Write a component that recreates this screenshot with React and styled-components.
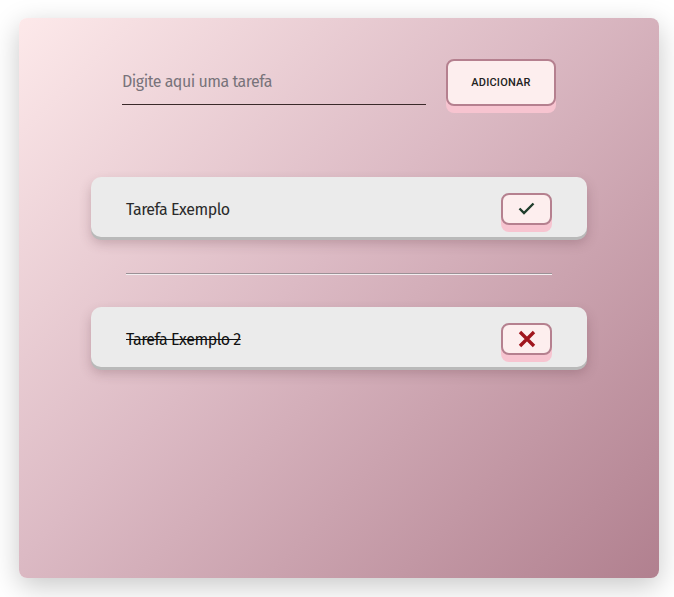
import React from "react";
import styled, { createGlobalStyle } from "styled-components";

const Global = createGlobalStyle`
  html, body { margin: 0; padding: 0; background: #ffffff; }
  body { font-family: "Fira Sans", "Open Sans", "Noto Sans", sans-serif; }
  * { box-sizing: border-box; }
`;

const Page = styled.div`
  padding: 18px 15px 19px 19px;
  width: 674px;
  height: 597px;
`;

const Panel = styled.main`
  width: 640px;
  height: 560px;
  border-radius: 8px;
  background: linear-gradient(135deg, #fde9ea 0%, #dcbac4 45%, #b1808f 100%);
  box-shadow: 0 8px 28px rgba(0, 0, 0, 0.22);
  padding-top: 41px;
  display: flex;
  flex-direction: column;
  align-items: center;
`;

const Form = styled.form`
  display: flex;
  align-items: flex-start;
  gap: 20px;
`;

const Input = styled.input`
  width: 304px;
  height: 45px;
  margin-top: 1px;
  border: none;
  border-bottom: 1px solid #3a2a2a;
  background: transparent;
  font-family: inherit;
  font-size: 16px;
  letter-spacing: -0.5px;
  color: #333;
  padding: 0 0 1px;
  outline: none;
  &::placeholder { color: #78737a; }
`;

const Button = styled.button`
  width: ${(p) => p.$w}px;
  height: ${(p) => p.$h}px;
  margin-top: ${(p) => p.$offset || 0}px;
  border: 2px solid #b5808f;
  border-radius: 8px;
  background: #fdeeee;
  box-shadow: 0 7px 0 #f7c4d0;
  display: flex;
  align-items: center;
  justify-content: center;
  font-family: "Roboto", "Liberation Sans", sans-serif;
  font-size: 11px;
  font-weight: 500;
  color: #222;
  letter-spacing: 0.2px;
  padding: 0;
  cursor: pointer;
`;

const List = styled.ul`
  list-style: none;
  margin: 71px 0 0;
  padding: 0;
  display: flex;
  flex-direction: column;
  align-items: center;
`;

const Card = styled.li`
  width: 496px;
  height: 60px;
  border-radius: 10px;
  background: #ebebeb;
  box-shadow: 0 3px 0 #b9b9b9, 0 6px 12px rgba(80, 40, 50, 0.25);
  display: flex;
  align-items: center;
  justify-content: space-between;
  padding: 0 35px;
`;

const Label = styled.span`
  font-size: 16px;
  letter-spacing: -0.5px;
  text-decoration: ${(p) => (p.$done ? "line-through" : "none")};
  text-decoration-color: #111;
  color: ${(p) => (p.$done ? "#111" : "#2a2a2a")};
  margin-top: 5px;
`;

const Divider = styled.hr`
  width: 426px;
  margin: 36px 0 32px;
  border: none;
  border-top: 1px solid #9b9196;
  border-bottom: 1px solid #f3eef0;
`;

const Check = () => (
  <svg width="17" height="13" viewBox="0 0 17 13">
    <path d="M1.5 6.5 L6 11 L15.5 1.5" fill="none" stroke="#1f3d2c" strokeWidth="2.4" />
  </svg>
);

const Cross = () => (
  <svg width="18" height="18" viewBox="0 0 18 18">
    <path d="M2 2 L16 16 M16 2 L2 16" fill="none" stroke="#a0161e" strokeWidth="3.4" />
  </svg>
);

export default function App() {
  return (
    <>
      <Global />
      <Page>
        <Panel>
          <Form onSubmit={(e) => e.preventDefault()}>
            <Input placeholder="Digite aqui uma tarefa" />
            <Button $w={110} $h={47} type="submit">ADICIONAR</Button>
          </Form>
          <List>
            <Card>
              <Label>Tarefa Exemplo</Label>
              <Button $w={51} $h={32} $offset={3} type="button"><Check /></Button>
            </Card>
            <Divider />
            <Card>
              <Label $done>Tarefa Exemplo 2</Label>
              <Button $w={51} $h={32} $offset={3} type="button"><Cross /></Button>
            </Card>
          </List>
        </Panel>
      </Page>
    </>
  );
}
